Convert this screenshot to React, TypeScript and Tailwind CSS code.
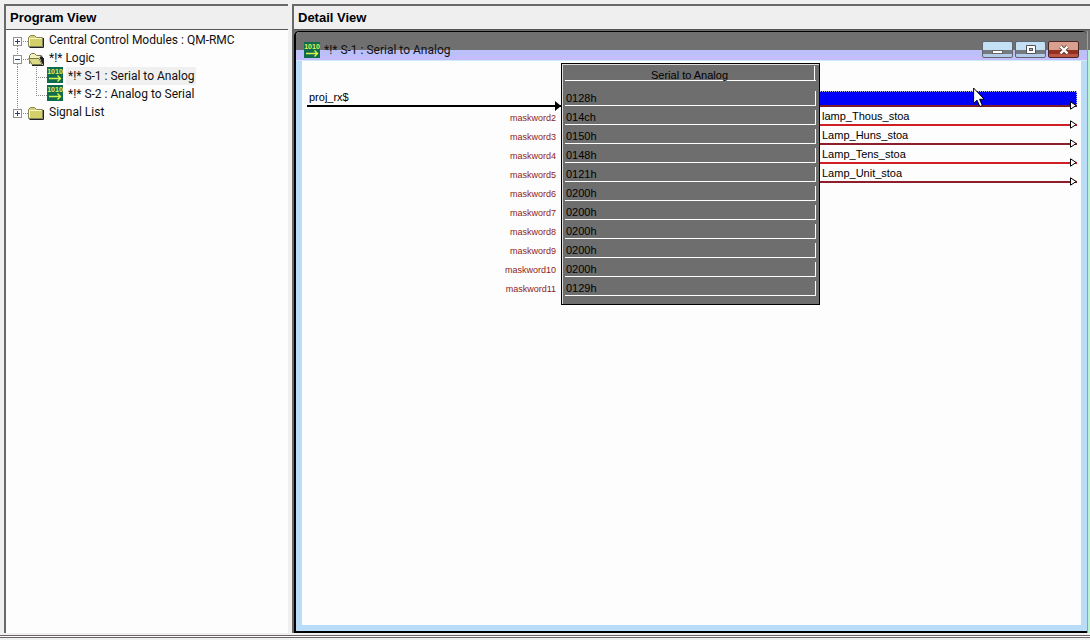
import clsx from "clsx";

const inputs = [
  { label: "proj_rx$", value: "0128h" },
  { label: "maskword2", value: "014ch" },
  { label: "maskword3", value: "0150h" },
  { label: "maskword4", value: "0148h" },
  { label: "maskword5", value: "0121h" },
  { label: "maskword6", value: "0200h" },
  { label: "maskword7", value: "0200h" },
  { label: "maskword8", value: "0200h" },
  { label: "maskword9", value: "0200h" },
  { label: "maskword10", value: "0200h" },
  { label: "maskword11", value: "0129h" },
];

const outputs = [
  { label: "lamp_Thous_stoa", dark: false },
  { label: "Lamp_Huns_stoa", dark: true },
  { label: "Lamp_Tens_stoa", dark: false },
  { label: "Lamp_Unit_stoa", dark: true },
];

function FolderIcon({ open = false }: { open?: boolean }) {
  return (
    <svg width="16" height="14" viewBox="0 0 16 14" className="mt-[3px] shrink-0">
      {open ? (
        <>
          <path d="M1.5 12V3.5L3.5 1.5H6.5L8.5 3.5H13.5V6" fill="#f4f2b8" stroke="#77774a" />
          <path d="M12 5H14.5V11.5Z" fill="#222" stroke="#222" />
          <path d="M.5 6.5H11L14 12.5H4Z" fill="#dcd984" stroke="#77774a" />
          <path d="M4 13.5H15.5V6" fill="none" stroke="#222" />
        </>
      ) : (
        <>
          <path d="M1.5 13.5H15.5V4" fill="none" stroke="#222" />
          <path d="M.5 12.5V3.5L2.5 1.5H6.5L8.5 3.5H14.5V12.5Z" fill="#d3d06c" stroke="#85855a" />
          <path d="M1.5 11.5V4.5H13.5" fill="none" stroke="#fbfac8" />
        </>
      )}
    </svg>
  );
}

function ModuleIcon() {
  return (
    <svg width="16" height="16" viewBox="0 0 16 16" className="shrink-0">
      <rect width="16" height="16" fill="#0e6b4c" />
      <text
        x="8"
        y="7"
        fontSize="7"
        fontWeight="bold"
        fontFamily="Liberation Sans"
        textAnchor="middle"
        fill="#e2f35a"
      >
        1010
      </text>
      <path d="M2 11.5H13M10.5 8.5L13.5 11.5L10.5 14.5" fill="none" stroke="#d8f34a" strokeWidth="1.4" />
    </svg>
  );
}

function Expander({ open, first, last, name }: { open: boolean; first?: boolean; last?: boolean; name: string }) {
  return (
    <button className="h-[18px] w-4 shrink-0" aria-label={name} aria-expanded={open}>
      <svg width="16" height="18" viewBox="0 0 16 18" shapeRendering="crispEdges">
        {!first && <path d="M5.5 0V6" stroke="#888" strokeDasharray="1 1" />}
        {!last && <path d="M5.5 15V18" stroke="#888" strokeDasharray="1 1" />}
        <path d="M11 10.5H16" stroke="#888" strokeDasharray="1 1" />
        <rect x="1.5" y="6.5" width="8" height="8" fill="#fff" stroke="#919191" />
        <path d="M3 10.5H8" stroke="#2d3f78" />
        {!open && <path d="M5.5 8V13" stroke="#2d3f78" />}
      </svg>
    </button>
  );
}

function ChildLines({ last }: { last?: boolean }) {
  return (
    <svg width="35" height="18" viewBox="0 0 35 18" shapeRendering="crispEdges" className="shrink-0">
      <path
        d={last ? "M5.5 0V18M24.5 0V10M24 10.5H35" : "M5.5 0V18M24.5 0V18M24 10.5H35"}
        fill="none"
        stroke="#888"
        strokeDasharray="1 1"
      />
    </svg>
  );
}

function ProgramTree() {
  return (
    <ul className="flex-1 bg-[#fdfdfd] pt-px pl-[6px] font-[Roboto] text-[12px] leading-[18px] whitespace-pre text-[#111]">
      <li className="flex h-[18px]">
        <Expander open={false} first name="Central Control Modules" />
        <FolderIcon />
        <span className="ml-[5px]">Central Control Modules : QM-RMC</span>
      </li>
      <li>
        <div className="flex h-[18px]">
          <Expander open name="Logic" />
          <FolderIcon open />
          <span className="ml-[5px]">*!* Logic</span>
        </div>
        <ul>
          <li className="flex h-[18px]">
            <ChildLines />
            <ModuleIcon />
            <span className="ml-[3px] bg-[#f0f0f0] px-[2px]">*!* S-1 : Serial to Analog</span>
          </li>
          <li className="flex h-[18px]">
            <ChildLines last />
            <ModuleIcon />
            <span className="ml-[3px] px-[2px]">*!* S-2 : Analog to Serial</span>
          </li>
        </ul>
      </li>
      <li className="flex h-[18px]">
        <Expander open={false} last name="Signal List" />
        <FolderIcon />
        <span className="ml-[5px]">Signal List</span>
      </li>
    </ul>
  );
}

function PaneHeader({ title }: { title: string }) {
  return (
    <h2 className="h-6 shrink-0 border-b border-[#555] bg-[#efefef] pl-1 font-['Liberation_Sans'] text-[13px] leading-[23px] font-bold text-black">
      {title}
    </h2>
  );
}

function WindowButtons() {
  const blue =
    "flex h-[17px] w-[31px] items-center justify-center rounded-[2px] border border-[#5f6670] bg-[linear-gradient(#c4e0f4_0_8px,#737a80_8px_12px,#b4cbe8_12px)]";
  return (
    <div className="flex gap-[2px]">
      <button className={blue} aria-label="Minimize">
        <svg width="12" height="11" viewBox="0 0 12 11">
          <rect x=".5" y="6.5" width="10" height="3" fill="#fff" stroke="#666" />
        </svg>
      </button>
      <button className={blue} aria-label="Maximize">
        <svg width="12" height="11" viewBox="0 0 12 11">
          <path d="M1.5 1.5H10.5V9.5H1.5Z" fill="#fff" stroke="#555" />
          <rect x="4.5" y="4.5" width="3" height="2" fill="#9fc3e0" stroke="#555" />
        </svg>
      </button>
      <button
        className="flex h-[17px] w-[31px] items-center justify-center rounded-[2px] border border-[#4a2724] bg-[linear-gradient(#d9a090_0_8px,#94301f_8px_12px,#bd5545_12px)]"
        aria-label="Close"
      >
        <svg width="12" height="10" viewBox="0 0 12 10">
          <path d="M2.5 1.5L9.5 8.5M9.5 1.5L2.5 8.5" stroke="#643" strokeWidth="4" />
          <path d="M2.5 1.5L9.5 8.5M9.5 1.5L2.5 8.5" stroke="#fff" strokeWidth="2.4" />
        </svg>
      </button>
    </div>
  );
}

function Arrow() {
  return (
    <svg width="8" height="9" viewBox="0 0 8 9" className="absolute right-0 -bottom-[5px]">
      <path d="M1.5 .8L7.2 4.5L1.5 8.2Z" fill="#fff" stroke="#000" />
    </svg>
  );
}

function Diagram() {
  return (
    <div className="relative flex items-start pt-[2px] pr-1 font-['Liberation_Sans'] text-[11px] text-black">
      <ul className="w-[259px] shrink-0 pt-[25px]">
        {inputs.map((row, i) =>
          i === 0 ? (
            <li
              key={row.label}
              className="relative ml-[5px] h-[19px] border-b-2 border-black pl-[2px] leading-[19px]"
            >
              {row.label}
              <svg width="6" height="10" viewBox="0 0 6 10" className="absolute right-0 -bottom-[6px]">
                <path d="M0 0L6 5L0 10Z" />
              </svg>
            </li>
          ) : (
            <li key={row.label} className="h-[19px] pr-[5px] text-right text-[9px] leading-[23px] text-[#8e1b1b]">
              {row.label}
            </li>
          ),
        )}
      </ul>

      <section className="w-[259px] shrink-0 border border-black bg-[#6e6e6e] pb-2 shadow-[inset_1px_1px_0_#ddd]">
        <h3 className="mx-[3px] mt-[2px] flex h-[15px] border-b border-white text-center leading-[19px]">
          <span className="mr-px flex-1 border-r border-white">Serial to Analog</span>
        </h3>
        <ul className="pt-[6px]">
          {inputs.map((row) => (
            <li key={row.label} className="mx-[3px] flex h-[19px] items-end border-b border-white">
              <span className="h-[14px] flex-1 border-r border-white pl-px leading-[15px]">{row.value}</span>
            </li>
          ))}
        </ul>
      </section>

      <ul className="min-w-0 flex-1 pt-[25px]">
        <li className="relative flex h-[19px] items-end border-b-2 border-[#7c1a2c]">
          <input
            readOnly
            aria-label="Output signal"
            className="h-[14px] w-full border-t border-r border-dotted border-[#b8b8d0] bg-[#0000f8] outline-none"
          />
          <Arrow />
        </li>
        {outputs.map((row) => (
          <li
            key={row.label}
            className={clsx(
              "relative h-[19px] border-b-2 pl-[2px] leading-[19px]",
              row.dark ? "border-[#8e1f2a]" : "border-[#cf1f24]",
            )}
          >
            {row.label}
            <Arrow />
          </li>
        ))}
      </ul>

      {/* mouse pointer */}
      <svg width="12" height="21" viewBox="0 0 12 21" className="absolute top-[26px] right-[96px]">
        <path d="M.6 1V16.5L4 13.2L6.8 19.6L9.4 18.5L6.6 12.3H11.2Z" fill="#fff" stroke="#000" />
      </svg>
    </div>
  );
}

function DetailWindow() {
  return (
    <div className="flex flex-1 bg-[linear-gradient(#6e6e6e_0_20px,#b9f3d3_20px)] pt-px">
      <div className="flex flex-1 flex-col rounded-t-[5px] border-t border-b-2 border-l-2 border-black bg-[#b9dcf9]">
        <div className="flex h-[29px] items-start justify-between rounded-t-[4px] bg-[linear-gradient(#707070_0_18px,#bbbffa_18px_24px,#c5bcfc_24px_28px,#cdeaf8_28px)] pt-[9px] pr-2 pl-2">
          <div className="flex items-center">
            <ModuleIcon />
            <h3 className="ml-[4px] font-[Roboto] text-[12px] leading-[18px] text-[#111]">
              *!* S-1 : Serial to Analog
            </h3>
          </div>
          <WindowButtons />
        </div>
        <div className="mx-[6px] mb-[6px] flex-1 bg-[#fdfdfd]">
          <Diagram />
        </div>
      </div>
      <div className="w-[3px] border-l border-[#55b8d8]" />
    </div>
  );
}

export default function App() {
  return (
    <div className="flex h-screen flex-col bg-[#f0f0f0]">
      <main className="flex min-h-0 flex-1 gap-1 pt-1 pl-1">
        <section className="flex w-[284px] shrink-0 flex-col border-t-2 border-l-2 border-[#696969]">
          <PaneHeader title="Program View" />
          <ProgramTree />
        </section>
        <section className="flex min-w-0 flex-1 flex-col border-t-2 border-l-2 border-[#696969]">
          <PaneHeader title="Detail View" />
          <DetailWindow />
        </section>
      </main>
      <div className="mt-[2px] h-[3px] border-y border-[#6a6466] bg-white" />
      <div className="h-[2px]" />
    </div>
  );
}
